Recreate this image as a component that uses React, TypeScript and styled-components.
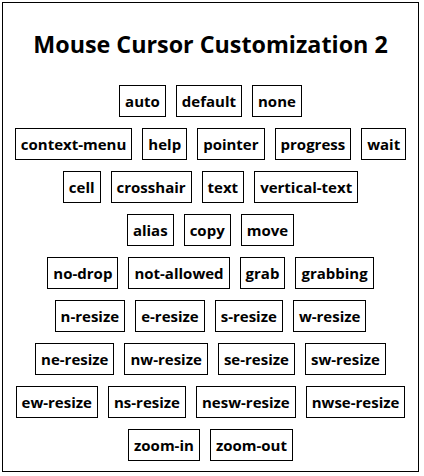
import React from "react";
import styled, { createGlobalStyle } from "styled-components";

const Global = createGlobalStyle`
  html, body { margin: 0; padding: 0; background: #fff; }
  body { font-family: "Open Sans", "Noto Sans CJK KR", sans-serif; }
`;

const Panel = styled.div`
  box-sizing: border-box;
  margin: 2px 0 0 2px;
  width: 417px;
  height: 470px;
  border: 1px solid #000;
  padding: 0 8px;
`;

const Title = styled.h1`
  margin: 0;
  padding-top: 26px;
  height: 56px;
  box-sizing: content-box;
  font-size: 23.3px;
  line-height: 30px;
  font-weight: 700;
  text-align: center;
  color: #000;
`;

const List = styled.div`
  display: flex;
  flex-direction: column;
  row-gap: 11px;
`;

const Row = styled.div`
  display: flex;
  justify-content: center;
  gap: 10px;
`;

const Cursor = styled.div<{ $cursor: string }>`
  box-sizing: border-box;
  height: 32px;
  padding: 0 5px;
  border: 1px solid #000;
  display: flex;
  align-items: center;
  font-size: 15px;
  font-weight: 700;
  color: #000;
  cursor: ${(p) => p.$cursor};
`;

const rows = [
  ["auto", "default", "none"],
  ["context-menu", "help", "pointer", "progress", "wait"],
  ["cell", "crosshair", "text", "vertical-text"],
  ["alias", "copy", "move"],
  ["no-drop", "not-allowed", "grab", "grabbing"],
  ["n-resize", "e-resize", "s-resize", "w-resize"],
  ["ne-resize", "nw-resize", "se-resize", "sw-resize"],
  ["ew-resize", "ns-resize", "nesw-resize", "nwse-resize"],
  ["zoom-in", "zoom-out"],
];

export default function App() {
  return (
    <>
      <Global />
      <Panel>
        <Title>Mouse Cursor Customization 2</Title>
        <List>
          {rows.map((r, i) => (
            <Row key={i}>
              {r.map((c) => (
                <Cursor key={c} $cursor={c}>
                  {c}
                </Cursor>
              ))}
            </Row>
          ))}
        </List>
      </Panel>
    </>
  );
}
